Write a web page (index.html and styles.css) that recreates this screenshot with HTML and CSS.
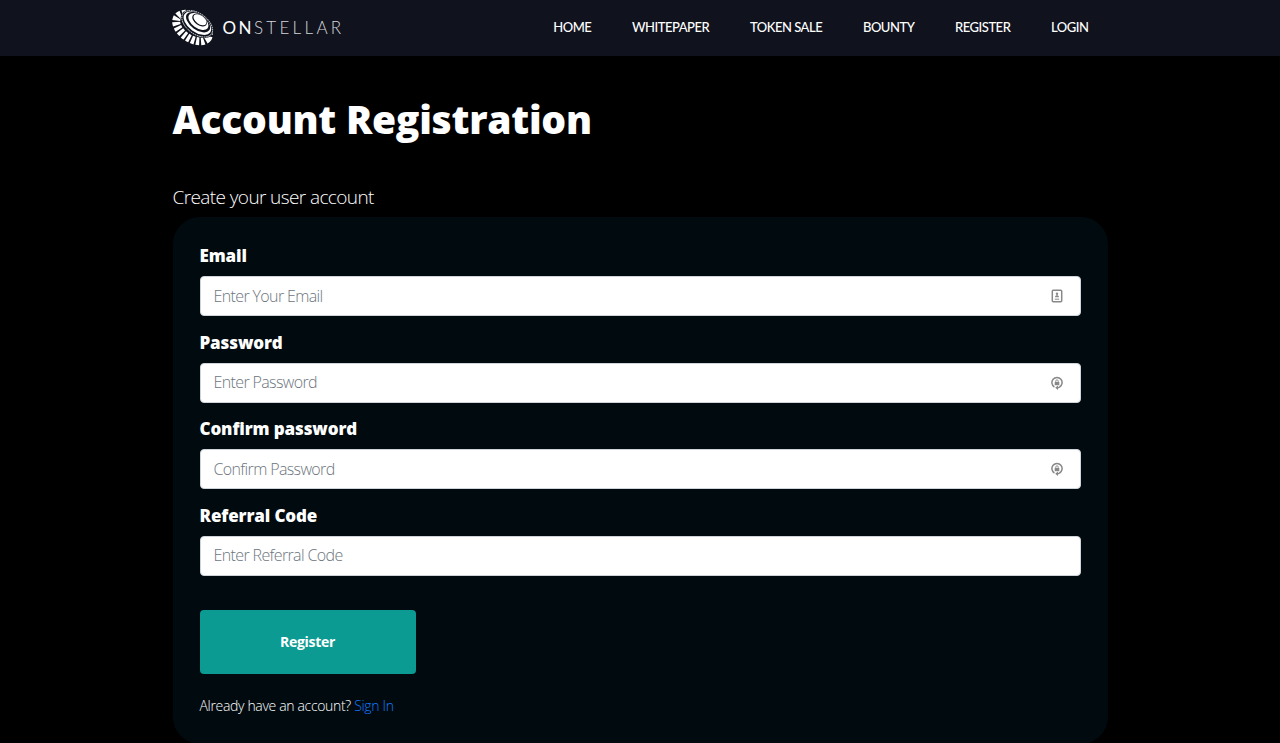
FILE: index.html
```
<!DOCTYPE html>
<html lang="en">
<head>
    <meta charset="UTF-8">
    <meta name="viewport" content="width=device-width, initial-scale=1.0">
    <title>Onstellar - Account Registration</title>
    <link rel="stylesheet" href="styles.css">
</head>
<body>
    <header class="navbar">
        <div class="container navbar-inner">
            <a href="#" class="logo">
                <svg class="logo-mark" width="44" height="37" viewBox="0 0 44 37">
                    <!-- blades -->
                    <ellipse cx="20.6" cy="18.6" rx="18.4" ry="11" transform="rotate(34 20.6 18.6)" fill="none" stroke="#fff" stroke-width="8" stroke-dasharray="3.2 1.6"/>
                    <!-- disc -->
                    <ellipse cx="25" cy="15" rx="18.4" ry="11.2" transform="rotate(36 25 15)" fill="#10131e"/>
                    <ellipse cx="25.2" cy="14.8" rx="17.5" ry="10.3" transform="rotate(36 25.2 14.8)" fill="none" stroke="#fff" stroke-width="0.8" stroke-dasharray="1.6 0.7"/>
                    <ellipse cx="25.4" cy="14.2" rx="15.8" ry="8.9" transform="rotate(36 25.4 14.2)" fill="#fff"/>
                    <ellipse cx="26.1" cy="13.2" rx="13.8" ry="7.7" transform="rotate(36 26.1 13.2)" fill="#10131e"/>
                    <ellipse cx="26.4" cy="12.5" rx="11.4" ry="6.5" transform="rotate(36 26.4 12.5)" fill="#fff"/>
                    <ellipse cx="27.6" cy="11.1" rx="8.4" ry="5" transform="rotate(36 27.6 11.1)" fill="#10131e"/>
                    <ellipse cx="28" cy="10.7" rx="7.4" ry="4.3" transform="rotate(36 28 10.7)" fill="#fff"/>
                </svg>
                <span class="logo-text"><span class="logo-on">ON</span><span class="logo-stellar">STELLAR</span></span>
            </a>
            <nav class="menu">
                <a href="#">HOME</a>
                <a href="#">WHITEPAPER</a>
                <a href="#">TOKEN SALE</a>
                <a href="#">BOUNTY</a>
                <a href="#">REGISTER</a>
                <a href="#">LOGIN</a>
            </nav>
        </div>
    </header>

    <main class="container">
        <h1>Account Registration</h1>
        <p class="subtitle">Create your user account</p>

        <form class="panel">
            <div class="form-group">
                <label for="email">Email</label>
                <div class="field">
                    <input type="email" id="email" placeholder="Enter Your Email">
                    <svg class="field-icon" width="12" height="14" viewBox="0 0 12 14">
                        <rect x="1.3" y="1.3" width="9.4" height="11.4" rx="1" fill="none" stroke="#888" stroke-width="1.5"/>
                        <circle cx="6" cy="4.7" r="1.2" fill="#888"/>
                        <path d="M4 8.2c0-2.6 4-2.6 4 0z" fill="#888"/>
                        <path d="M3.8 10.2h4.4" stroke="#888" stroke-width="1"/>
                    </svg>
                </div>
            </div>
            <div class="form-group">
                <label for="password">Password</label>
                <div class="field">
                    <input type="password" id="password" placeholder="Enter Password">
                    <svg class="field-icon" width="12" height="14" viewBox="0 0 12 14">
                        <path d="M3.4 11A5.1 5.1 0 1 1 8.6 11Q7.6 11.8 6 11.8" fill="none" stroke="#888" stroke-width="1.5"/>
                        <path d="M7 9.4l-2.8 2.3L7 14z" fill="#888"/>
                        <rect x="3.7" y="6" width="4.6" height="3.2" fill="#888"/>
                        <path d="M4.8 6.2V5a1.2 1.2 0 0 1 2.4 0v1.2" fill="none" stroke="#888" stroke-width="0.9"/>
                    </svg>
                </div>
            </div>
            <div class="form-group">
                <label for="confirm">Confirm password</label>
                <div class="field">
                    <input type="password" id="confirm" placeholder="Confirm Password">
                    <svg class="field-icon" width="12" height="14" viewBox="0 0 12 14">
                        <path d="M3.4 11A5.1 5.1 0 1 1 8.6 11Q7.6 11.8 6 11.8" fill="none" stroke="#888" stroke-width="1.5"/>
                        <path d="M7 9.4l-2.8 2.3L7 14z" fill="#888"/>
                        <rect x="3.7" y="6" width="4.6" height="3.2" fill="#888"/>
                        <path d="M4.8 6.2V5a1.2 1.2 0 0 1 2.4 0v1.2" fill="none" stroke="#888" stroke-width="0.9"/>
                    </svg>
                </div>
            </div>
            <div class="form-group">
                <label for="referral">Referral Code</label>
                <div class="field">
                    <input type="text" id="referral" placeholder="Enter Referral Code">
                </div>
            </div>
            <button type="button" class="btn-register">Register</button>
            <p class="signin">Already have an account? <a href="#">Sign In</a></p>
        </form>
    </main>
</body>
</html>
```
FILE: styles.css
```
/* General styling */
* {
    box-sizing: border-box;
}

body {
    font-family: "Open Sans", "Noto Sans", sans-serif;
    font-weight: 300;
    background-color: #000;
    color: #fff;
    margin: 0;
    overflow: hidden;
}

a {
    text-decoration: none;
}

.container {
    width: 935px;
    margin: 0 auto;
}

/* Navigation */
.navbar {
    height: 56px;
    background-color: #10131e;
}

.navbar-inner {
    display: flex;
    align-items: center;
    justify-content: space-between;
    height: 54px;
}

.logo {
    display: flex;
    align-items: center;
    color: #fff;
}

.logo-mark {
    margin-right: 7px;
    margin-left: -1px;
}

.logo-text {
    display: flex;
    padding-top: 1px;
    font-family: Lato, sans-serif;
    font-size: 17px;
    line-height: 20px;
}

.logo-on {
    font-weight: 400;
    letter-spacing: 2.4px;
}

.logo-stellar {
    font-weight: 300;
    letter-spacing: 3.3px;
    color: #d4d5da;
}

.menu {
    display: flex;
    gap: 40.7px;
    margin-right: 19px;
}

.menu a {
    font-family: Lato, sans-serif;
    font-size: 13px;
    font-weight: 500;
    line-height: 20px;
    letter-spacing: -0.48px;
    color: #fff;
}

/* Headings */
h1 {
    margin: 37px 0 0;
    font-size: 39px;
    font-weight: 800;
    line-height: 52px;
    letter-spacing: -0.27px;
}

.subtitle {
    margin: 36px 0 0;
    font-size: 19px;
    line-height: 32px;
    letter-spacing: -0.6px;
}

/* Registration form */
.panel {
    height: 527px;
    margin-top: 4px;
    padding: 23.4px 27px;
    border-radius: 27px;
    background-color: #010b0f;
}

.form-group {
    margin-bottom: 10.5px;
}

label {
    display: block;
    height: 36px;
    font-size: 17px;
    font-weight: 800;
    line-height: 31px;
    letter-spacing: -0.12px;
}

.field {
    position: relative;
    height: 40px;
}

.field input {
    display: block;
    width: 100%;
    height: 40px;
    padding: 0 13px 1px;
    border: 1px solid #ced4da;
    border-radius: 4px;
    background-color: #fff;
    font-family: inherit;
    font-size: 16px;
    font-weight: 300;
    letter-spacing: -0.63px;
}

.field input::placeholder {
    color: #6c757d;
    opacity: 1;
}

.field-icon {
    position: absolute;
    top: 13px;
    right: 18px;
}

.btn-register {
    display: block;
    width: 216px;
    height: 64px;
    margin-top: 34px;
    border: none;
    border-radius: 4px;
    background-color: #0b9b92;
    color: #fff;
    font-family: inherit;
    font-size: 14px;
    font-weight: 700;
    letter-spacing: -0.3px;
    cursor: pointer;
}

.signin {
    margin: 20px 0 0;
    font-size: 14px;
    line-height: 24px;
    letter-spacing: -0.33px;
}

.signin a {
    color: #147aff;
}
```
